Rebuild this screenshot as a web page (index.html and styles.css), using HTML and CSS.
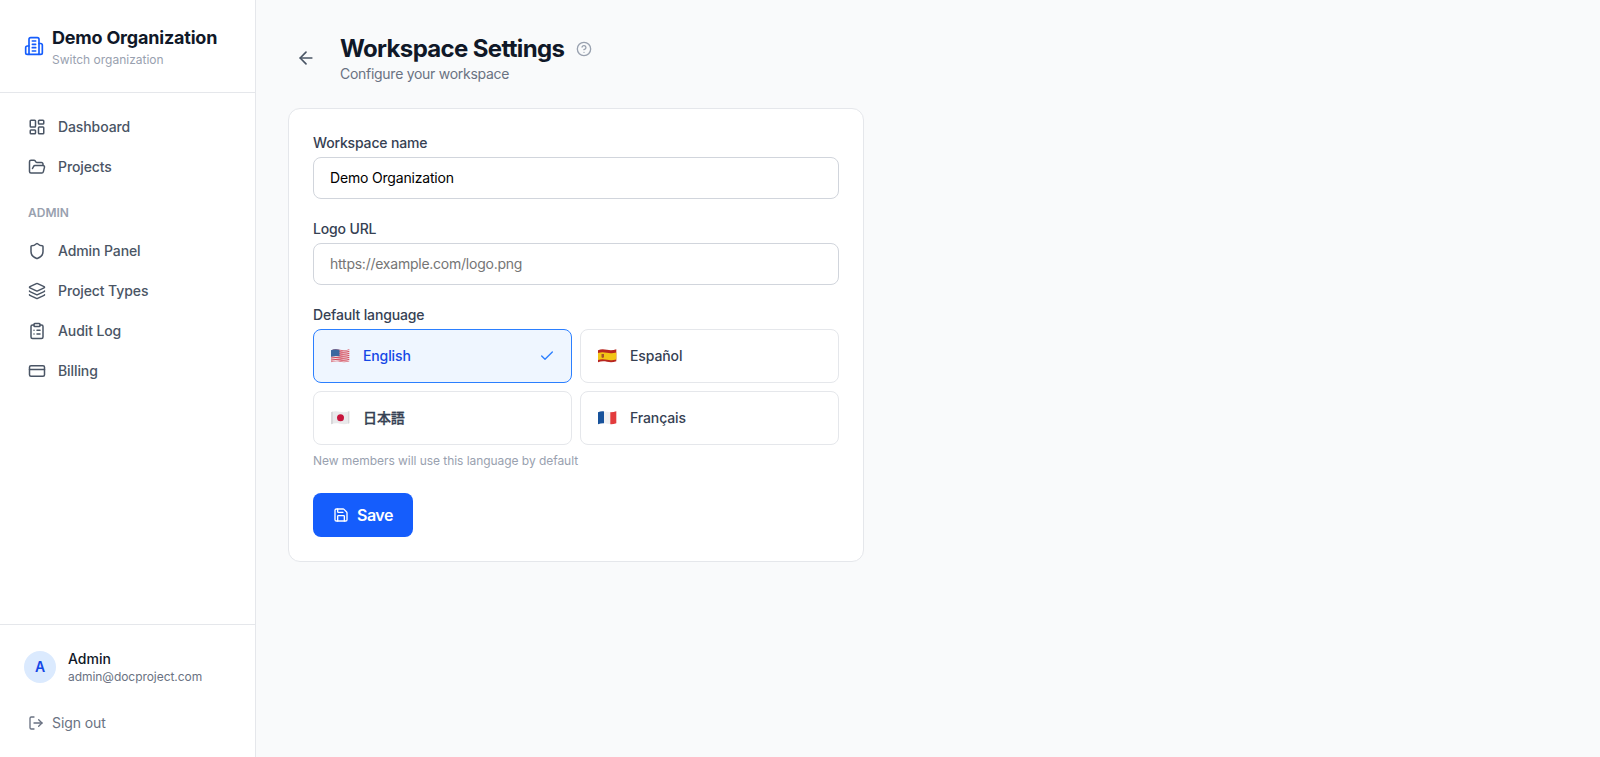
FILE: index.html
```
<!DOCTYPE html>
<html lang="en">
<head>
  <meta charset="UTF-8">
  <meta name="viewport" content="width=device-width, initial-scale=1.0">
  <title>Workspace Settings</title>
  <link rel="stylesheet" href="styles.css">
</head>
<body>
  <div class="layout">
    <aside class="sidebar">
      <a class="org" href="#">
        <svg class="icon icon-lg" viewBox="0 0 24 24"><path d="M6 22V4a2 2 0 0 1 2-2h8a2 2 0 0 1 2 2v18Z"/><path d="M6 12H4a2 2 0 0 0-2 2v6a2 2 0 0 0 2 2h2"/><path d="M18 9h2a2 2 0 0 1 2 2v9a2 2 0 0 1-2 2h-2"/><path d="M10 6h4"/><path d="M10 10h4"/><path d="M10 14h4"/><path d="M10 18h4"/></svg>
        <div>
          <div class="org-name">Demo Organization</div>
          <div class="org-switch">Switch organization</div>
        </div>
      </a>

      <nav class="nav">
        <a class="nav-item" href="#">
          <svg class="icon icon-md" viewBox="0 0 24 24"><rect width="7" height="9" x="3" y="3" rx="1"/><rect width="7" height="5" x="14" y="3" rx="1"/><rect width="7" height="9" x="14" y="12" rx="1"/><rect width="7" height="5" x="3" y="16" rx="1"/></svg>
          Dashboard
        </a>
        <a class="nav-item" href="#">
          <svg class="icon icon-md" viewBox="0 0 24 24"><path d="m6 14 1.5-2.9A2 2 0 0 1 9.24 10H20a2 2 0 0 1 1.94 2.5l-1.54 6a2 2 0 0 1-1.95 1.5H4a2 2 0 0 1-2-2V5a2 2 0 0 1 2-2h3.9a2 2 0 0 1 1.69.9l.81 1.2a2 2 0 0 0 1.67.9H18a2 2 0 0 1 2 2v2"/></svg>
          Projects
        </a>
        <div class="nav-heading">ADMIN</div>
        <a class="nav-item" href="#">
          <svg class="icon icon-md" viewBox="0 0 24 24"><path d="M20 13c0 5-3.5 7.5-7.66 8.95a1 1 0 0 1-.67-.01C7.5 20.5 4 18 4 13V6a1 1 0 0 1 1-1c2 0 4.5-1.2 6.24-2.72a1.17 1.17 0 0 1 1.52 0C14.51 3.81 17 5 19 5a1 1 0 0 1 1 1z"/></svg>
          Admin Panel
        </a>
        <a class="nav-item" href="#">
          <svg class="icon icon-md" viewBox="0 0 24 24"><path d="M12.83 2.18a2 2 0 0 0-1.66 0L2.6 6.08a1 1 0 0 0 0 1.83l8.58 3.91a2 2 0 0 0 1.66 0l8.58-3.9a1 1 0 0 0 0-1.83z"/><path d="M2 12a1 1 0 0 0 .58.91l8.6 3.91a2 2 0 0 0 1.65 0l8.58-3.9A1 1 0 0 0 22 12"/><path d="M2 17a1 1 0 0 0 .58.91l8.6 3.91a2 2 0 0 0 1.65 0l8.58-3.9A1 1 0 0 0 22 17"/></svg>
          Project Types
        </a>
        <a class="nav-item" href="#">
          <svg class="icon icon-md" viewBox="0 0 24 24"><rect width="8" height="4" x="8" y="2" rx="1"/><path d="M16 4h2a2 2 0 0 1 2 2v14a2 2 0 0 1-2 2H6a2 2 0 0 1-2-2V6a2 2 0 0 1 2-2h2"/><path d="M12 11h4"/><path d="M12 16h4"/><path d="M8 11h.01"/><path d="M8 16h.01"/></svg>
          Audit Log
        </a>
        <a class="nav-item" href="#">
          <svg class="icon icon-md" viewBox="0 0 24 24"><rect width="20" height="14" x="2" y="5" rx="2"/><path d="M2 10h20"/></svg>
          Billing
        </a>
      </nav>

      <div class="sidebar-footer">
        <div class="user">
          <div class="avatar">A</div>
          <div>
            <div class="user-name">Admin</div>
            <div class="user-email">admin@docproject.com</div>
          </div>
        </div>
        <button class="sign-out" type="button">
          <svg class="icon icon-sm" viewBox="0 0 24 24"><path d="M9 21H5a2 2 0 0 1-2-2V5a2 2 0 0 1 2-2h4"/><path d="m16 17 5-5-5-5"/><path d="M21 12H9"/></svg>
          Sign out
        </button>
      </div>
    </aside>

    <main class="main">
      <header class="page-header">
        <button class="back" type="button" aria-label="Back">
          <svg class="icon icon-lg" viewBox="0 0 24 24"><path d="m12 19-7-7 7-7"/><path d="M19 12H5"/></svg>
        </button>
        <div>
          <div class="title-row">
            <h1>Workspace Settings</h1>
            <svg class="icon icon-sm help" viewBox="0 0 24 24"><circle cx="12" cy="12" r="10"/><path d="M9.09 9a3 3 0 0 1 5.83 1c0 2-3 3-3 3"/><path d="M12 17h.01"/></svg>
          </div>
          <p class="subtitle">Configure your workspace</p>
        </div>
      </header>

      <form class="card">
        <div class="field">
          <label for="name">Workspace name</label>
          <input id="name" type="text" value="Demo Organization">
        </div>
        <div class="field">
          <label for="logo">Logo URL</label>
          <input id="logo" type="url" placeholder="https://example.com/logo.png">
        </div>
        <div class="field">
          <label>Default language</label>
          <div class="languages">
            <button class="language selected" type="button">
              <svg class="flag" viewBox="0 0 21 16">
                <clipPath id="wave"><path d="M1 2.2C4 .9 7 1.2 10 1.8s6 .6 9.3-.5v12c-3.3 1.2-6.3 1.1-9.3.5S4 13.1 1 14.3z"/></clipPath>
                <g clip-path="url(#wave)">
                  <path fill="#eedde1" d="M0 0h21v16H0z"/>
                  <path fill="none" stroke="#d4485a" stroke-width="1.1" d="M0 2.3C4 1 7 1.3 10 1.9s6 .6 11-.9M0 4.3C4 3 7 3.3 10 3.9s6 .6 11-.9M0 6.3C4 5 7 5.3 10 5.9s6 .6 11-.9M0 8.3C4 7 7 7.3 10 7.9s6 .6 11-.9M0 10.3C4 9 7 9.3 10 9.9s6 .6 11-.9M0 12.3C4 11 7 11.3 10 11.9s6 .6 11-.9M0 14.3C4 13 7 13.3 10 13.9s6 .6 11-.9"/>
                  <path fill="#3c679f" d="M0 0h9.5v8.3C6.5 7.7 4 7.8 0 9z"/>
                </g>
              </svg>
              <span>English</span>
              <svg class="icon icon-sm check" viewBox="0 0 24 24"><path d="M20 6 9 17l-5-5"/></svg>
            </button>
            <button class="language" type="button">
              <svg class="flag" viewBox="0 0 21 16">
                <g clip-path="url(#wave)">
                  <path fill="#b8261f" d="M0 0h21v16H0z"/>
                  <path fill="#f2c416" d="M0 5.2c4-1.3 7-1 10-.4s6 .6 11-.9v7c-5 1.5-8 1.5-11 .9s-6-.9-10 .4z"/>
                  <path fill="#a8512b" d="M4.500 6h2.500v3.300L5.700 10 4.500 9.300z"/>
                </g>
              </svg>
              <span>Español</span>
            </button>
            <button class="language" type="button">
              <svg class="flag" viewBox="0 0 21 16">
                <g clip-path="url(#wave)">
                  <path fill="#e9e9eb" d="M0 0h21v16H0z"/>
                  <path fill="#d8d8da" d="M0 0h3v16H0zM18 0h3v16h-3z"/>
                  <circle cx="10.5" cy="7.8" r="3.5" fill="#c8143c"/>
                </g>
              </svg>
              <span lang="ja">日本語</span>
            </button>
            <button class="language" type="button">
              <svg class="flag" viewBox="0 0 21 16">
                <g clip-path="url(#wave)">
                  <path fill="#f0f0f1" d="M0 0h21v16H0z"/>
                  <path fill="#17529b" d="M0 0h7v16H0z"/>
                  <path fill="#e33b3d" d="M13.3 0H21v16h-7.7z"/>
                </g>
              </svg>
              <span>Français</span>
            </button>
          </div>
          <p class="hint">New members will use this language by default</p>
        </div>
        <button class="save" type="button">
          <svg class="icon icon-sm" viewBox="0 0 24 24"><path d="M15.2 3a2 2 0 0 1 1.4.6l3.8 3.8a2 2 0 0 1 .6 1.4V19a2 2 0 0 1-2 2H5a2 2 0 0 1-2-2V5a2 2 0 0 1 2-2z"/><path d="M17 21v-7a1 1 0 0 0-1-1H8a1 1 0 0 0-1 1v7"/><path d="M7 3v4a1 1 0 0 0 1 1h7"/></svg>
          Save
        </button>
      </form>
    </main>
  </div>
</body>
</html>
```
FILE: styles.css
```
* {
  box-sizing: border-box;
  margin: 0;
  padding: 0;
}

body {
  background-color: #f9fafb;
  color: #101828;
  font-family: Inter, "Noto Sans CJK JP", sans-serif;
  font-size: 14px;
  line-height: 20px;
}

a {
  color: inherit;
  text-decoration: none;
}

button,
input {
  font: inherit;
}

button {
  background: none;
  border: none;
  cursor: pointer;
}

.layout {
  display: flex;
  min-height: 100vh;
}

/* Icons */
.icon {
  flex-shrink: 0;
  fill: none;
  stroke: currentColor;
  stroke-width: 2;
  stroke-linecap: round;
  stroke-linejoin: round;
}

.icon-sm {
  width: 16px;
  height: 16px;
}

.icon-md {
  width: 18px;
  height: 18px;
}

.icon-lg {
  width: 20px;
  height: 20px;
}

/* Sidebar */
.sidebar {
  display: flex;
  flex-direction: column;
  flex-shrink: 0;
  width: 256px;
  background-color: #fff;
  border-right: 1px solid #e5e7eb;
}

.org {
  display: flex;
  align-items: center;
  gap: 8px;
  padding: 24px;
  border-bottom: 1px solid #e5e7eb;
}

.org .icon {
  color: #155dfc;
}

.org-name {
  font-size: 18px;
  font-weight: 700;
  line-height: 28px;
  letter-spacing: -0.2px;
  white-space: nowrap;
}

.org-switch {
  color: #99a1af;
  font-size: 12px;
  line-height: 16px;
}

.nav {
  display: flex;
  flex: 1;
  flex-direction: column;
  gap: 4px;
  padding: 16px;
}

.nav-item {
  display: flex;
  align-items: center;
  gap: 12px;
  padding: 8px 12px;
  border-radius: 8px;
  color: #4a5565;
  font-weight: 500;
  letter-spacing: -0.1px;
}

.nav-heading {
  padding: 16px 12px 8px;
  color: #99a1af;
  font-size: 12px;
  font-weight: 600;
  line-height: 16px;
}

.sidebar-footer {
  padding: 16px;
  border-top: 1px solid #e5e7eb;
}

.user {
  display: flex;
  align-items: center;
  gap: 12px;
  padding: 8px;
  margin-bottom: 12px;
}

.avatar {
  display: flex;
  align-items: center;
  justify-content: center;
  width: 32px;
  height: 32px;
  border-radius: 50%;
  background-color: #dbeafe;
  color: #1447e6;
  font-weight: 600;
}

.user-name {
  font-weight: 500;
}

.user-email {
  color: #6a7282;
  font-size: 12px;
  line-height: 16px;
  letter-spacing: -0.05px;
}

.sign-out {
  display: flex;
  align-items: center;
  gap: 8px;
  width: 100%;
  padding: 8px 12px;
  color: #6a7282;
  letter-spacing: -0.1px;
}

/* Page */
.main {
  flex: 1;
  padding: 32px;
}

.page-header {
  display: flex;
  align-items: center;
  gap: 16px;
  margin-bottom: 24px;
}

.back {
  display: flex;
  padding: 8px;
  color: #4a5565;
}

.title-row {
  display: flex;
  align-items: center;
  gap: 12px;
  padding-top: 2px;
}

h1 {
  font-size: 24px;
  font-weight: 700;
  line-height: 30px;
  letter-spacing: -0.66px;
}

.help {
  color: #99a1af;
}

.subtitle {
  color: #6a7282;
  letter-spacing: -0.28px;
}

.card {
  max-width: 576px;
  padding: 24px;
  background-color: #fff;
  border: 1px solid #e5e7eb;
  border-radius: 12px;
}

.field {
  margin-bottom: 20px;
}

.field label {
  display: block;
  margin-bottom: 4px;
  color: #364153;
  font-weight: 500;
  letter-spacing: -0.16px;
}

.field input {
  display: block;
  width: 100%;
  height: 42px;
  padding: 9px 16px 11px;
  background-color: #fff;
  border: 1px solid #d1d5dc;
  border-radius: 8px;
  color: #000;
  letter-spacing: -0.18px;
}

.field input::placeholder {
  color: #757575;
  letter-spacing: -0.24px;
}

.languages {
  display: grid;
  grid-template-columns: 1fr 1fr;
  gap: 8px;
}

.language {
  display: flex;
  align-items: center;
  gap: 12px;
  height: 54px;
  padding: 12px 16px;
  border: 1px solid #e5e7eb;
  border-radius: 8px;
  color: #364153;
  font-weight: 500;
  letter-spacing: -0.12px;
}

.language.selected {
  background-color: #eff6ff;
  border-color: #2b7fff;
  color: #1447e6;
}

/* No medium weight in the CJK family, so thicken the regular one */
.language :lang(ja) {
  -webkit-text-stroke: 0.3px currentColor;
}

.flag {
  width: 21px;
  height: 16px;
}

.check {
  margin-left: auto;
  color: #2b7fff;
}

.hint {
  margin-top: 8px;
  color: #99a1af;
  font-size: 12px;
  line-height: 16px;
  letter-spacing: -0.05px;
}

.save {
  display: flex;
  align-items: center;
  gap: 8px;
  margin-top: 24px;
  padding: 10px 20px;
  background-color: #155dfc;
  border-radius: 8px;
  color: #fff;
  font-size: 16px;
  font-weight: 600;
  line-height: 24px;
  letter-spacing: -0.5px;
}
```
